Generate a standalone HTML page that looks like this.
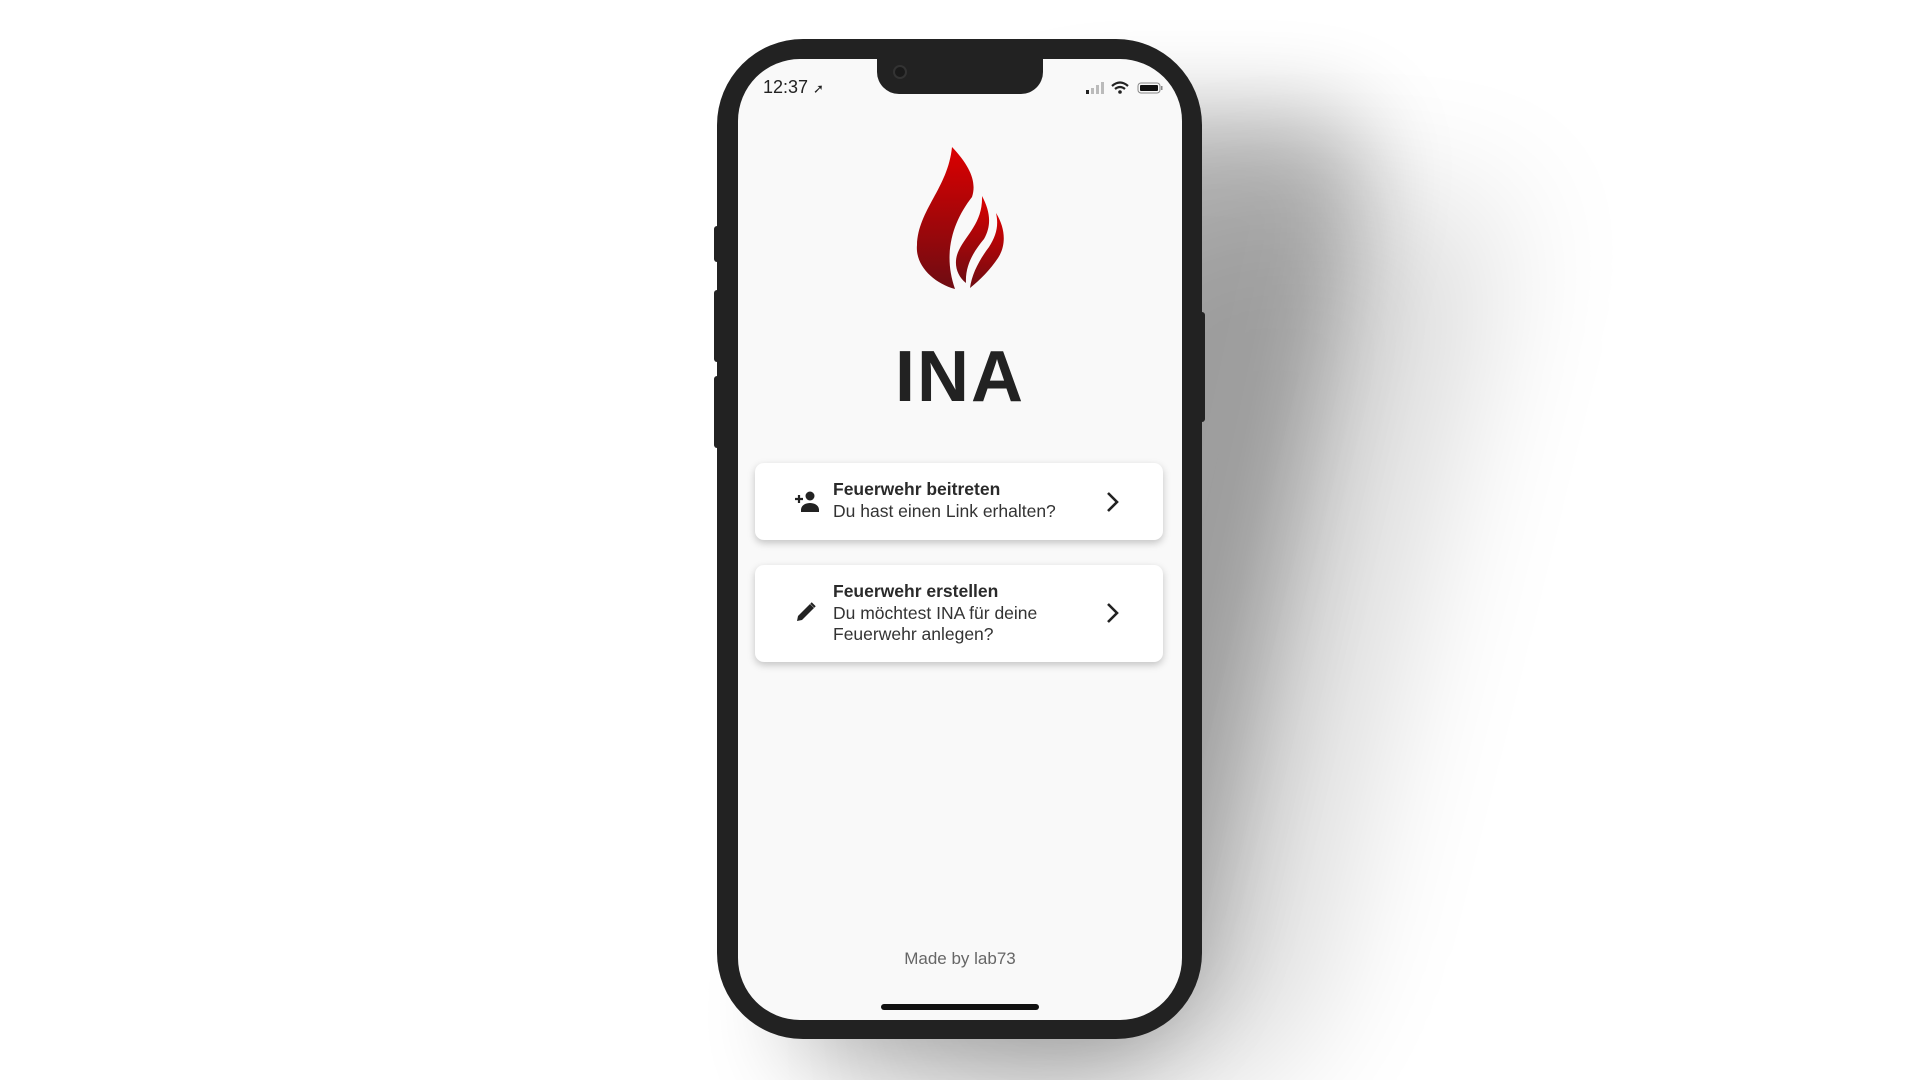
<!DOCTYPE html>
<html><head><meta charset="utf-8"><style>
*{margin:0;padding:0;box-sizing:border-box}
html,body{width:1920px;height:1080px;overflow:hidden}
body{background:#fff;font-family:"Liberation Sans",sans-serif}
#w{position:relative;width:1920px;height:1080px;overflow:hidden}
.sh{position:absolute;border-radius:90px;background:#000}
.phone{position:absolute;left:717px;top:39px;width:485px;height:1000px;border-radius:86px;background:#222}
.btn{position:absolute;background:#222;border-radius:3px}
.screen{position:absolute;left:738px;top:59px;width:444px;height:961px;border-radius:62px;background:#f9f9f9;overflow:hidden}
.notch{position:absolute;left:877px;top:50px;width:166px;height:44px;background:#222;border-radius:0 0 22px 22px}
.card{position:absolute;left:755px;width:408px;background:#fff;border-radius:9px;box-shadow:0 3px 8px rgba(0,0,0,.22)}
.t{position:absolute;left:78px;font-size:17.5px;color:#333;line-height:21.5px}
.t b{font-weight:bold;color:#2a2a2a}
</style></head><body><div id="w">
<div class="sh" style="left:880px;top:110px;width:400px;height:960px;filter:blur(45px);opacity:.28;transform:skew(-12deg)"></div>
<div class="sh" style="left:1000px;top:200px;width:400px;height:900px;filter:blur(70px);opacity:.14;transform:skew(-14deg)"></div>
<div class="btn" style="left:714px;top:226px;width:6px;height:36px"></div>
<div class="btn" style="left:714px;top:290px;width:6px;height:72px"></div>
<div class="btn" style="left:714px;top:376px;width:6px;height:72px"></div>
<div class="btn" style="left:1199px;top:312px;width:6px;height:110px"></div>
<div class="phone"></div>
<div class="screen"></div>
<div class="notch"></div>
<div style="position:absolute;left:893px;top:65px;width:14px;height:14px;border-radius:50%;background:#1a1a1a;border:2px solid #333"></div>
<div style="position:absolute;left:763px;top:77px;font-size:18px;color:#222">12:37 <span style="font-size:13px">➚</span></div>
<svg style="position:absolute;left:1084px;top:80px" width="80" height="16" viewBox="0 0 80 16">
<rect x="2" y="10" width="3" height="4" fill="#222"/><rect x="7" y="8" width="3" height="6" fill="#bbb"/><rect x="12" y="5" width="3" height="9" fill="#bbb"/><rect x="17" y="2" width="3" height="12" fill="#bbb"/>
<path d="M28 6 Q36 -1 44 6 M31 9 Q36 5 41 9" stroke="#222" stroke-width="2.2" fill="none"/><circle cx="36" cy="12" r="1.8" fill="#222"/>
<rect x="54" y="3" width="22" height="10" rx="3" fill="none" stroke="#888" stroke-width="1"/><rect x="56" y="5" width="18" height="6" rx="1" fill="#111"/><rect x="77" y="6" width="1.5" height="4" fill="#888"/>
</svg>
<svg style="position:absolute;left:0;top:0" width="1920" height="1080">
<defs><linearGradient id="g" x1="0" y1="0" x2="0" y2="1"><stop offset="0" stop-color="#dc0000"/><stop offset="1" stop-color="#6e0c12"/></linearGradient></defs>
<g fill="url(#g)">
<path d="M952,147 C970,166 977,182 972,197 C954,220 942,252 955,289 C933,283 915,265 917,245 C918,210 948,188 952,147 Z"/>
<path d="M982,196 C990,211 992,225 984,239 C974,251 965,265 966,283 C956,275 953,262 959,250 C967,234 983,222 982,196 Z"/>
<path d="M996,213 C1006,229 1006,246 998,258 C990,270 980,280 970,288 C972,273 980,259 989,247 C996,236 999,226 996,213 Z"/>
</g></svg>
<div style="position:absolute;left:738px;width:444px;top:337px;text-align:center;font-size:72px;font-weight:bold;color:#222;letter-spacing:2px;line-height:80px">INA</div>
<div class="card" style="top:463px;height:77px">
<svg style="position:absolute;left:38px;top:28px" width="28" height="22" viewBox="0 0 28 22"><path d="M2 8h8M6 4v8" stroke="#222" stroke-width="2.2"/><circle cx="17" cy="5" r="4.5" fill="#222"/><path d="M8 19c0-5 5-7 9-7s9 2 9 7v2H8z" fill="#222"/></svg>
<div class="t" style="top:16px"><b>Feuerwehr beitreten</b><br>Du hast einen Link erhalten?</div>
<svg style="position:absolute;left:350px;top:28px" width="16" height="22" viewBox="0 0 16 22"><path d="M3 2l9 9-9 9" stroke="#222" stroke-width="2.6" fill="none"/></svg>
</div>
<div class="card" style="top:565px;height:97px">
<svg style="position:absolute;left:40px;top:36px" width="22" height="22" viewBox="0 0 22 22"><path d="M2 20l1-5 12-12 4 4-12 12z" fill="#222"/><path d="M16 2l4 4" stroke="#222" stroke-width="2"/></svg>
<div class="t" style="top:16px"><b>Feuerwehr erstellen</b><br>Du möchtest INA für deine<br>Feuerwehr anlegen?</div>
<svg style="position:absolute;left:350px;top:37px" width="16" height="22" viewBox="0 0 16 22"><path d="M3 2l9 9-9 9" stroke="#222" stroke-width="2.6" fill="none"/></svg>
</div>
<div style="position:absolute;left:738px;width:444px;top:949px;text-align:center;font-size:17px;color:#666">Made by lab73</div>
<div style="position:absolute;left:881px;top:1004px;width:158px;height:6px;border-radius:3px;background:#111"></div>
</div></body></html>
